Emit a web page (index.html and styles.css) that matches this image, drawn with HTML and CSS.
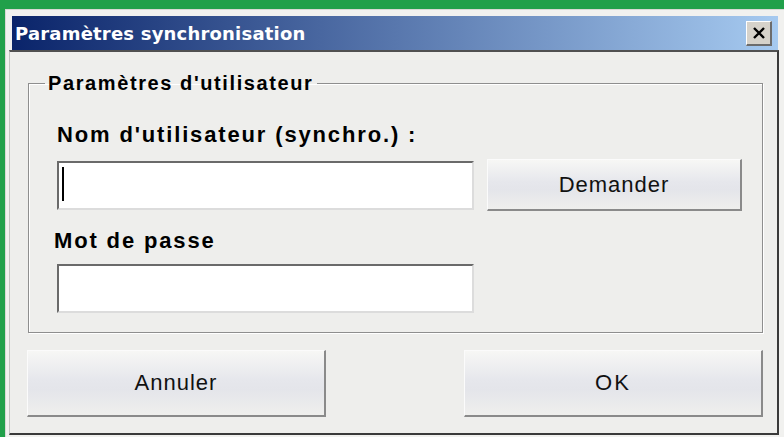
FILE: index.html
```html
<!DOCTYPE html>
<html lang="fr">
<head>
  <meta charset="UTF-8">
  <title>Paramètres synchronisation</title>
  <link rel="stylesheet" href="styles.css">
</head>
<body>

<div class="window">
  <div class="titlebar">
    <span class="title">Paramètres synchronisation</span>
    <span class="close">
      <svg width="14" height="12" viewBox="0 0 14 12"><path d="M2 1 L12 11 M12 1 L2 11" stroke="#000" stroke-width="2.4"/></svg>
    </span>
  </div>

  <div class="client">
    <fieldset class="group">
      <legend>Paramètres d'utilisateur</legend>

      <div class="label">Nom d'utilisateur (synchro.) :</div>
      <div class="row">
        <div class="input"><span class="caret"></span></div>
        <button class="btn btn-ask">Demander</button>
      </div>

      <div class="label label-pass">Mot de passe</div>
      <div class="row">
        <div class="input"></div>
      </div>
    </fieldset>

    <div class="actions">
      <button class="btn btn-big">Annuler</button>
      <button class="btn btn-big">OK</button>
    </div>
  </div>
</div>

</body>
</html>
```

FILE: styles.css
```css
body {
  margin: 0;
  background: #21a04a;
  overflow: hidden;
  font-family: "Liberation Sans", Arial, sans-serif;
}
.window {
  margin: 9px 0 0 5px;
  width: 790px;
  height: 440px;
  box-sizing: border-box;
  background: #f1f1ef;
  border-top: 1px solid #d8d8d4;
  border-left: 1px solid #d8d8d4;
  padding: 3px 0 0 3px;
}
.titlebar {
  margin: 3px 0 0 3px;
  width: 766px;
  height: 34px;
  box-sizing: border-box;
  padding: 0 6px 0 3px;
  display: flex;
  align-items: center;
  justify-content: space-between;
  background: linear-gradient(to right, #0a246a, #a6caf0);
}
.title {
  color: #fff;
  font-family: "DejaVu Sans", sans-serif;
  font-weight: bold;
  font-size: 18px;
  letter-spacing: 0.2px;
}
.close {
  width: 26px;
  height: 25px;
  box-sizing: border-box;
  display: flex;
  align-items: center;
  justify-content: center;
  background: #d6d2ca;
  border-top: 1px solid #fff;
  border-left: 1px solid #fff;
  border-right: 2px solid #6c6c6c;
  border-bottom: 2px solid #6c6c6c;
}
.client {
  width: 770px;
  height: 385px;
  box-sizing: border-box;
  background: #eeeeec;
  border-top: 2px solid #505050;
  border-right: 2px solid #3a3a3a;
  border-bottom: 2px solid #3a3a3a;
  border-left: 1px solid #c4c4c2;
  padding: 20px 14px 0 18px;
}
.group {
  margin: 0;
  padding: 0 0 16px 0;
  height: 261px;
  box-sizing: border-box;
  border: 1px solid #8e8e8e;
  box-shadow: inset 1px 1px 0 #fff, 1px 1px 0 #fff;
}
.group legend {
  margin-left: 16px;
  padding: 0 4px 0 3px;
  font-weight: bold;
  font-size: 20px;
  line-height: 22px;
  letter-spacing: 1.6px;
  color: #000;
}
.label {
  margin: 29px 0 0 28px;
  font-weight: bold;
  font-size: 22px;
  line-height: 24px;
  letter-spacing: 1.85px;
  color: #000;
}
.label-pass {
  margin: 18px 0 0 25px;
}
.row {
  display: flex;
  align-items: center;
  margin: 12px 0 0 28px;
}
.label-pass + .row {
  margin-top: 11px;
}
.input {
  position: relative;
  width: 417px;
  height: 49px;
  box-sizing: border-box;
  background: #fff;
  border-top: 2px solid #6a6a6a;
  border-left: 2px solid #6a6a6a;
  border-right: 2px solid #dcdcdc;
  border-bottom: 2px solid #dcdcdc;
}
.caret {
  position: absolute;
  left: 3px;
  top: 4px;
  width: 2px;
  height: 34px;
  background: #000;
}
.btn {
  font-family: "Liberation Sans", Arial, sans-serif;
  font-size: 22px;
  letter-spacing: 1px;
  color: #111;
  background: linear-gradient(#f7f7f5, #e6e7ec 45%, #e4e5ea 60%, #efefed);
  border-top: 1px solid #fbfbfb;
  border-left: 1px solid #fbfbfb;
  border-right: 2px solid #8a8a8a;
  border-bottom: 2px solid #8a8a8a;
  padding: 0;
}
.btn-ask {
  margin-left: 13px;
  width: 255px;
  height: 52px;
}
.actions {
  display: flex;
  justify-content: space-between;
  margin: 17px 0 0 -1px;
}
.btn-big {
  width: 299px;
  height: 67px;
}
.btn-big + .btn-big {
  letter-spacing: 2px;
}
```
